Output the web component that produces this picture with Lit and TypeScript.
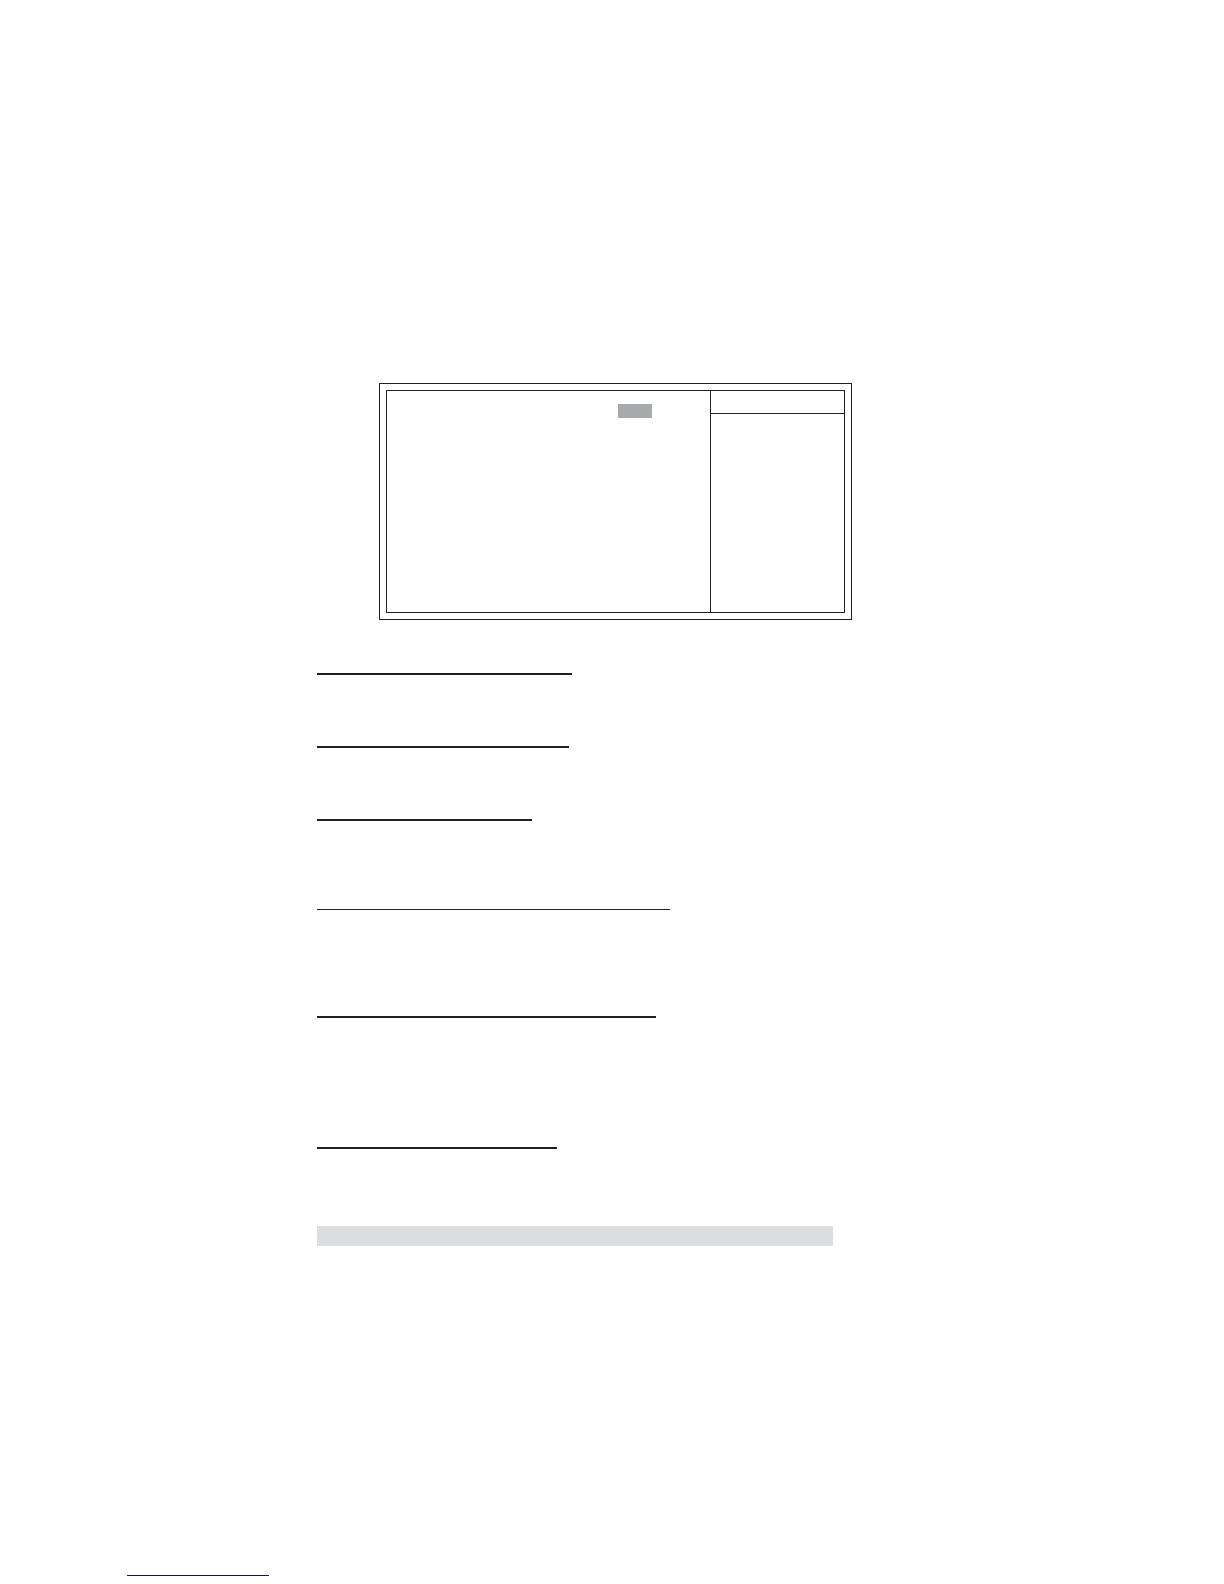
import { LitElement, html, css } from "lit";
import { customElement } from "lit/decorators.js";
import { styleMap } from "lit/directives/style-map.js";

interface Rule {
  width: number;
  weight: number;
  space: number;
}

// Heading rules: length, stroke weight and the clear space beneath each.
const RULES: Rule[] = [
  { width: 255, weight: 2, space: 71 },
  { width: 252, weight: 2, space: 71 },
  { width: 215, weight: 2, space: 88 },
  { width: 353, weight: 1, space: 106 },
  { width: 339, weight: 2, space: 129 },
  { width: 240, weight: 2, space: 77 },
];

@customElement("setup-frame")
export class SetupFrame extends LitElement {
  static styles = css`
    :host {
      display: block;
      padding: 6px;
      border: 1px solid #231f20;
    }
    .panes {
      display: grid;
      grid-template-columns: minmax(0, 323fr) minmax(0, 134fr);
      min-height: 221px;
      border: 1px solid #231f20;
    }
    .settings {
      display: flex;
      justify-content: flex-end;
      align-items: flex-start;
      padding: 13px 58px 13px 13px;
    }
    .selected {
      width: 34px;
      height: 14px;
      background: #a7a9ab;
    }
    .help {
      border-left: 1px solid #231f20;
    }
    .help-head {
      height: 22px;
      border-bottom: 1px solid #231f20;
    }
  `;

  render() {
    return html`
      <div class="panes">
        <div class="settings"><div class="selected"></div></div>
        <div class="help"><div class="help-head"></div></div>
      </div>
    `;
  }
}

@customElement("app-root")
export class AppRoot extends LitElement {
  static styles = css`
    :host {
      display: block;
      background: #ffffff;
      font-family: "Liberation Sans", sans-serif;
    }
    .page {
      padding: 383px 0 8px;
    }
    .figure {
      margin: 0 372px 53px 379px;
    }
    .body {
      display: flow-root;
      margin: 0 391px 0 317px;
    }
    hr {
      border: 0;
      margin: 0;
      max-width: 100%;
    }
    .rule {
      background: #231f20;
    }
    .band {
      height: 20px;
      background: #dcddde;
    }
    .foot {
      margin: 329px 0 0 127px;
    }
    .foot-rule {
      width: 142px;
      height: 1px;
      background: #100c8c;
    }
  `;

  render() {
    return html`
      <main class="page">
        <setup-frame class="figure"></setup-frame>
        <section class="body">
          ${RULES.map(
            (rule) => html`<hr
              class="rule"
              style=${styleMap({
                width: `${rule.width}px`,
                height: `${rule.weight}px`,
                marginBottom: `${rule.space}px`,
              })}
            />`,
          )}
          <div class="band"></div>
        </section>
        <footer class="foot"><hr class="foot-rule" /></footer>
      </main>
    `;
  }
}
